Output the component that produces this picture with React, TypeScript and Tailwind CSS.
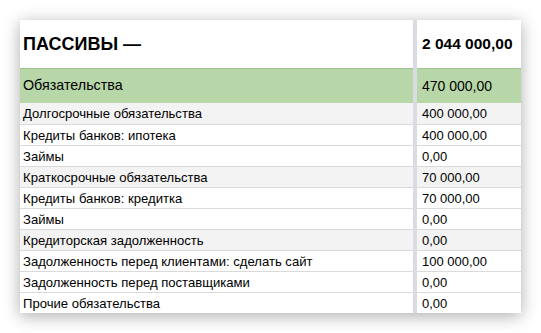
import React from "react";

interface Row {
  label: string;
  value: string;
  shaded?: boolean;
}

const rows: Row[] = [
  { label: "Долгосрочные обязательства", value: "400 000,00", shaded: true },
  { label: "Кредиты банков: ипотека", value: "400 000,00" },
  { label: "Займы", value: "0,00" },
  { label: "Краткосрочные обязательства", value: "70 000,00", shaded: true },
  { label: "Кредиты банков: кредитка", value: "70 000,00" },
  { label: "Займы", value: "0,00" },
  { label: "Кредиторская задолженность", value: "0,00", shaded: true },
  { label: "Задолженность перед клиентами: сделать сайт", value: "100 000,00" },
  { label: "Задолженность перед поставщиками", value: "0,00" },
  { label: "Прочие обязательства", value: "0,00" },
];

const App: React.FC = () => {
  return (
    <div className="w-[541px] h-[333px] bg-white pt-[20px] pl-[20px] font-['Liberation_Sans',Arial,sans-serif] text-black">
      <div className="w-[501px] bg-white shadow-[0_3px_16px_rgba(0,0,0,0.33)]">
        <div className="grid grid-cols-[393px_4px_104px]">
          {/* header */}
          <div className="h-[48px] flex items-center pl-[3px] text-[18px] font-bold">
            ПАССИВЫ —
          </div>
          <div className="row-span-12 bg-[#d9dce3]" />
          <div className="h-[48px] flex items-center pl-[5px] text-[15.5px] font-bold">
            2 044 000,00
          </div>

          {/* group row */}
          <div className="h-[35px] flex items-center pl-[3px] text-[14.3px] bg-[#b7d7a8] border-t border-[#9fc48f]">
            Обязательства
          </div>
          <div className="h-[35px] flex items-center pl-[5px] text-[14px] bg-[#b7d7a8] border-t border-[#9fc48f]">
            470 000,00
          </div>

          {rows.map((r, i) => (
            <React.Fragment key={i}>
              <div
                className={`h-[21px] flex items-center pl-[3px] pt-px text-[13.1px] ${
                  i > 0 ? "border-t border-[#dadada]" : ""
                } ${r.shaded ? "bg-[#f3f3f3]" : "bg-white"}`}
              >
                {r.label}
              </div>
              <div
                className={`h-[21px] flex items-center pl-[5px] pt-px text-[13px] ${
                  i > 0 ? "border-t border-[#dadada]" : ""
                } ${r.shaded ? "bg-[#f3f3f3]" : "bg-white"}`}
              >
                {r.value}
              </div>
            </React.Fragment>
          ))}
        </div>
      </div>
    </div>
  );
};

export default App;
